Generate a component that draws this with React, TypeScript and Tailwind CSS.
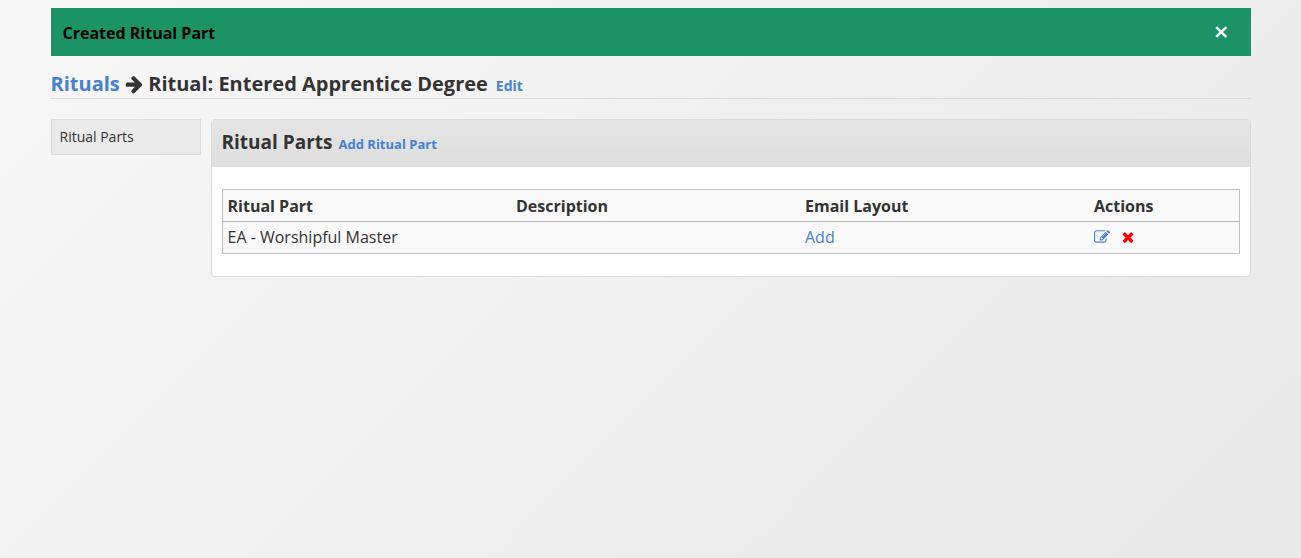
import { useState } from "react";

type IconProps = { className?: string };

function ArrowRightIcon({ className }: IconProps) {
  return (
    <svg viewBox="64 0 1600 1792" fill="currentColor" aria-hidden="true" className={className}>
      <path d="M1600 960q0 54-37 91l-651 651q-39 37-91 37-51 0-90-37l-75-75q-38-38-38-91t38-91l293-293h-704q-52 0-84.5-37.5t-32.5-90.5v-128q0-53 32.5-90.5t84.5-37.5h704l-293-294q-38-36-38-90t38-90l75-75q38-38 90-38 53 0 91 38l651 651q37 35 37 90z" />
    </svg>
  );
}

function EditIcon({ className }: IconProps) {
  return (
    <svg viewBox="0 0 1792 1792" fill="currentColor" aria-hidden="true" className={className}>
      <path d="M888 1184l116-116-152-152-116 116v56h96v96h56zm440-720q-16-16-33 1l-350 350q-17 17-1 33t33-1l350-350q17-17 1-33zm80 594v190q0 119-84.5 203.5t-203.5 84.5h-832q-119 0-203.5-84.5t-84.5-203.5v-832q0-119 84.5-203.5t203.5-84.5h832q63 0 117 25 15 7 18 23 3 17-9 29l-49 49q-14 14-32 8-23-6-45-6h-832q-66 0-113 47t-47 113v832q0 66 47 113t113 47h832q66 0 113-47t47-113v-126q0-13 9-22l64-64q15-15 35-7t20 29zm-96-738l288 288-672 672h-288v-288zm444 132l-92 92-288-288 92-92q28-28 68-28t68 28l152 152q28 28 28 68t-28 68z" />
    </svg>
  );
}

function RemoveIcon({ className }: IconProps) {
  return (
    <svg viewBox="0 0 1792 1792" fill="currentColor" aria-hidden="true" className={className}>
      <path d="M1490 1322q0 40-28 68l-136 136q-28 28-68 28t-68-28l-294-294-294 294q-28 28-68 28t-68-28l-136-136q-28-28-28-68t28-68l294-294-294-294q-28-28-28-68t28-68l136-136q28-28 68-28t68 28l294 294 294-294q28-28 68-28t68 28l136 136q28 28 28 68t-28 68l-294 294 294 294q28 28 28 68z" />
    </svg>
  );
}

const parts = [{ name: "EA - Worshipful Master", description: "" }];
const columns = ["Ritual Part", "Description", "Email Layout", "Actions"];

export default function App() {
  const [showNotice, setShowNotice] = useState(true);

  return (
    <div className="min-h-screen bg-linear-135 from-[#f7f7f7] to-[#e8e8e8] pt-2 font-['Open_Sans',sans-serif] text-base text-[#333]">
      <div className="mx-auto max-w-[1200px]">
        {showNotice && (
          <div role="status" className="flex h-12 items-center justify-between bg-[#1c9367] pr-[22px] pl-3 font-bold text-black">
            <p className="pt-0.5">Created Ritual Part</p>
            <button
              type="button"
              aria-label="Close"
              onClick={() => setShowNotice(false)}
              className="pb-0.5 text-[26px] leading-6 font-semibold text-white"
            >
              ×
            </button>
          </div>
        )}

        <header className="mt-4 flex items-baseline border-b border-[#dadada] text-xl leading-6 font-bold">
          <h1 className="pb-0.5">
            <a href="#rituals" className="text-[#4680ce]">Rituals</a>{" "}
            <ArrowRightIcon className="inline h-5 w-[18px] align-[-3px]" />{" "}
            Ritual: Entered Apprentice Degree
          </h1>
          <a href="#edit" className="ml-2 text-sm leading-6 text-[#4680ce]">Edit</a>
        </header>

        <div className="mt-5 flex items-start gap-2.5">
          <nav className="w-[150px] shrink-0">
            <a href="#parts" className="block border border-[#dadada] bg-[#eaeaea] px-2 py-1.5 text-sm leading-[22px]">
              Ritual Parts
            </a>
          </nav>

          <section className="min-w-0 flex-1 rounded-sm border border-[#dadada] bg-white">
            <div className="flex items-baseline gap-1.5 bg-linear-to-b from-[#e5e5e5] to-[#dedede] px-2.5 pt-2 pb-[11px] font-bold">
              <h2 className="text-[19px] leading-7">Ritual Parts</h2>
              <a href="#add-part" className="text-[13px] leading-5 text-[#4680ce]">Add Ritual Part</a>
            </div>
            <div className="px-2.5 py-[22px]">
              <table className="w-full table-fixed border-collapse border border-[#bfbfbf] bg-[#f9f9f9] text-left leading-6">
                <thead>
                  <tr className="border-b border-[#b5b5b5]">
                    {columns.map((column) => (
                      <th key={column} className={column === "Actions" ? "w-[150px] px-[5px] pt-1 pb-[3px]" : "px-[5px] pt-1 pb-[3px]"}>
                        {column}
                      </th>
                    ))}
                  </tr>
                </thead>
                <tbody>
                  {parts.map((part) => (
                    <tr key={part.name}>
                      <td className="px-[5px] pt-[3px] pb-1">{part.name}</td>
                      <td className="px-[5px] pt-[3px] pb-1">{part.description}</td>
                      <td className="px-[5px] pt-[3px] pb-1">
                        <a href="#add-layout" className="text-[#4680ce]">Add</a>
                      </td>
                      <td className="px-[5px] pt-[3px] pb-1">
                        <div className="flex items-center gap-2.5">
                          <a href="#edit-part" aria-label="Edit part" className="text-[#4680ce]">
                            <EditIcon className="size-4" />
                          </a>
                          <button type="button" aria-label="Remove part" className="text-[#f00]">
                            <RemoveIcon className="size-4" />
                          </button>
                        </div>
                      </td>
                    </tr>
                  ))}
                </tbody>
              </table>
            </div>
          </section>
        </div>
      </div>
    </div>
  );
}
